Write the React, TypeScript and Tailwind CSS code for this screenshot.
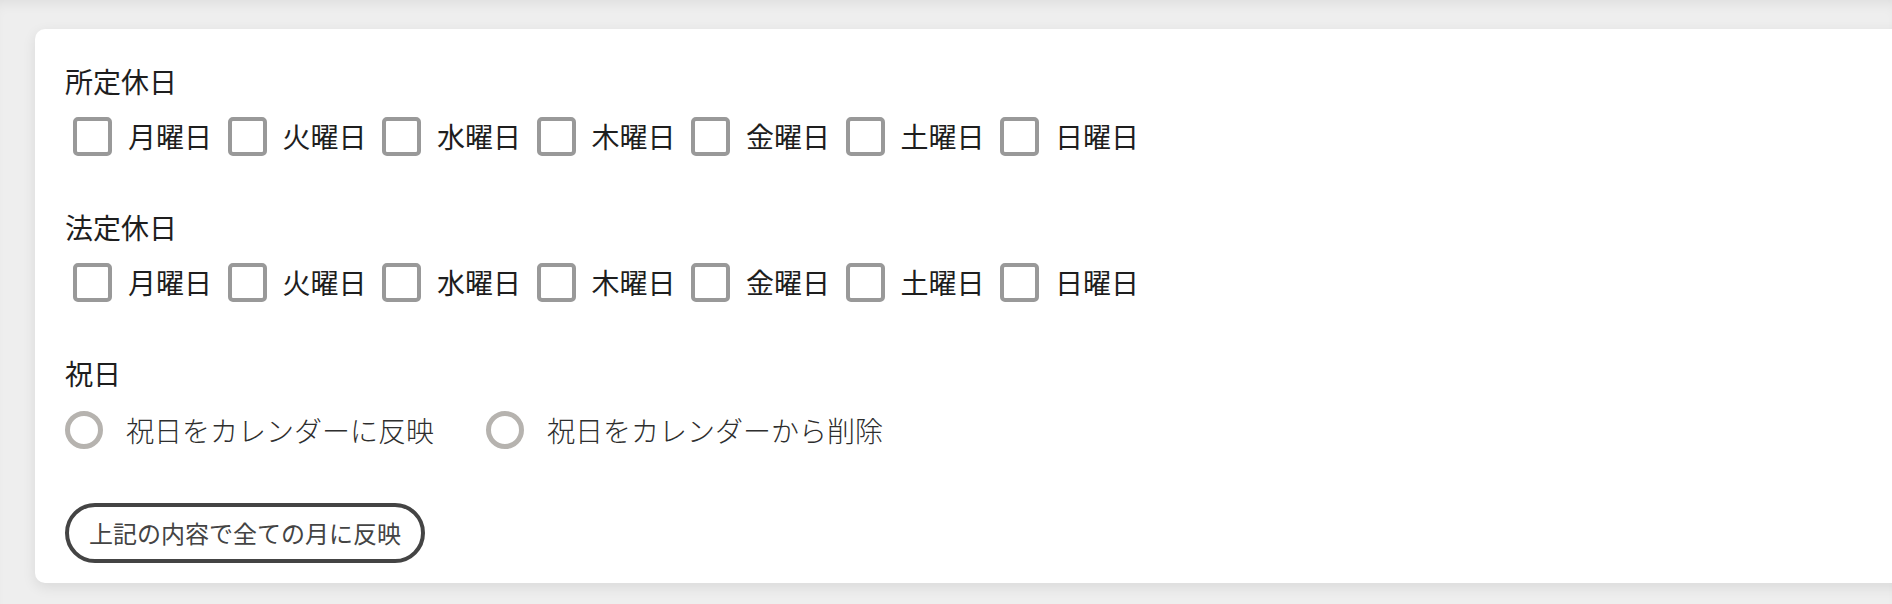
const days = ['月曜日', '火曜日', '水曜日', '木曜日', '金曜日', '土曜日', '日曜日']

function DayRow() {
  return (
    <div className="mt-[16px] flex h-[39px] items-center gap-[15.5px] pl-[8px]">
      {days.map((d) => (
        <label key={d} className="flex items-center">
          <span className="h-[39px] w-[39px] rounded-[5px] border-[4px] border-[#999999] bg-white" />
          <span className="ml-[16px] text-[28px] leading-[39px] text-[#1e1e1e]">{d}</span>
        </label>
      ))}
    </div>
  )
}

function Radio({ label }: { label: string }) {
  return (
    <label className="flex items-center">
      <span className="h-[38px] w-[38px] rounded-full border-[5px] border-[#b6b3af] bg-white" />
      <span className="ml-[23px] text-[28px] font-light leading-[38px] text-[#2e2e2e]">{label}</span>
    </label>
  )
}

export default function App() {
  return (
    <div
      className="min-h-[604px] w-full overflow-hidden bg-[#eeeeee] pt-[29px] shadow-[inset_0_10px_14px_-8px_rgba(0,0,0,0.08)]"
      style={{ fontFamily: '"Noto Sans CJK JP", "Noto Sans", sans-serif' }}
    >
      <div className="ml-[35px] mr-[-40px] rounded-[10px] bg-white pb-[20px] pl-[30px] pt-[32px] shadow-[0_4px_14px_rgba(0,0,0,0.09)]">
        <h2 className="text-[28px] font-normal leading-[40px] text-[#1e1e1e]">所定休日</h2>
        <DayRow />

        <h2 className="mt-[51px] text-[28px] font-normal leading-[40px] text-[#1e1e1e]">法定休日</h2>
        <DayRow />

        <h2 className="mt-[51px] text-[28px] font-normal leading-[40px] text-[#1e1e1e]">祝日</h2>
        <div className="mt-[18px] flex h-[38px] items-center gap-[52px]">
          <Radio label="祝日をカレンダーに反映" />
          <Radio label="祝日をカレンダーから削除" />
        </div>

        <button className="mt-[54px] h-[60px] rounded-full border-[4px] border-[#444444] bg-white px-[20px] text-[24px] leading-[52px] text-[#444444]">
          上記の内容で全ての月に反映
        </button>
      </div>
    </div>
  )
}
